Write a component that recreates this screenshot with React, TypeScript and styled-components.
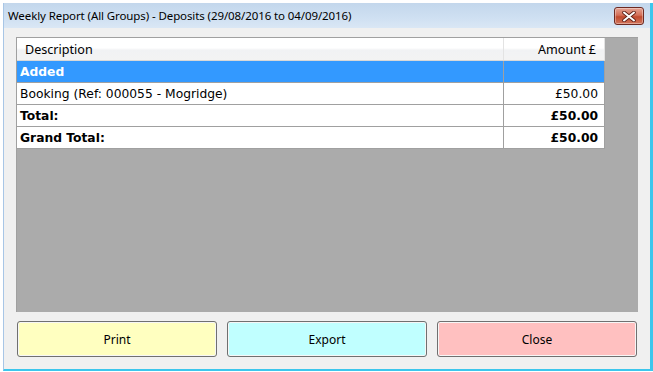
import { type FC } from "react";
import { createGlobalStyle, styled } from "styled-components";

const GlobalStyle = createGlobalStyle`
  html, body {
    margin: 0;
    padding: 0;
    background: #ffffff;
  }
`;

const Window = styled.div`
  margin: 3px 0 0 3px;
  width: 646px;
  height: 366px;
  border-left: 1px solid #a8c6e6;
  border-right: 3px solid #3cc6ec;
  border-bottom: 2px solid #3cc6ec;
  display: flex;
  flex-direction: column;
  font-family: "Noto Sans", "DejaVu Sans", sans-serif;
`;

const TitleBar = styled.div`
  height: 25px;
  display: flex;
  align-items: center;
  justify-content: space-between;
  padding: 0 6px 0 4px;
  background: linear-gradient(to bottom, #c3d7ec 0%, #cfe0f2 60%, #dae7f5 100%);
`;

const Title = styled.span`
  font-size: 11.5px;
  color: #000;
  letter-spacing: -0.1px;
`;

const CloseButton = styled.button`
  width: 30px;
  height: 18px;
  margin-top: 1px;
  padding: 0;
  border: 1px solid #6d2a22;
  border-radius: 3px;
  background: linear-gradient(to bottom, #e4a393 0%, #d46f58 45%, #c04a2e 55%, #d3765d 100%);
  box-shadow: inset 0 0 0 1px rgba(255, 255, 255, 0.35);
  display: flex;
  align-items: center;
  justify-content: center;
`;

const Body = styled.div`
  flex: 1;
  background: #f0f0f0;
  padding: 9px 12px 11px 12px;
  display: flex;
  flex-direction: column;
`;

const GridPanel = styled.div`
  height: 275px;
  background: #ababab;
  border-left: 1px solid #a0a0a0;
  border-top: 1px solid #a0a0a0;
  box-sizing: border-box;
`;

const Table = styled.table`
  width: 588px;
  border-collapse: collapse;
  background: #fff;
  font-family: "DejaVu Sans", Verdana, sans-serif;
  font-size: 12.3px;
  color: #000;
`;

const HeadCell = styled.th<{ $right?: boolean }>`
  height: 22px;
  padding: 0 8px;
  font-family: "Noto Sans", sans-serif;
  font-size: 12.6px;
  font-weight: normal;
  text-align: ${(p) => (p.$right ? "right" : "left")};
  width: ${(p) => (p.$right ? "84px" : "auto")};
  background: linear-gradient(to bottom, #ffffff 0%, #ffffff 45%, #f1f2f4 55%, #f3f3f3 100%);
  border-right: 1px solid #e3e3e3;
  border-bottom: 1px solid #d8d8d8;
`;

const Row = styled.tr<{ $selected?: boolean }>`
  background: ${(p) => (p.$selected ? "#3399ff" : "#ffffff")};
  color: ${(p) => (p.$selected ? "#ffffff" : "#000000")};
`;

const Cell = styled.td<{ $right?: boolean; $bold?: boolean }>`
  height: 21px;
  padding: 0 ${(p) => (p.$right ? "6px" : "3px")};
  text-align: ${(p) => (p.$right ? "right" : "left")};
  font-weight: ${(p) => (p.$bold ? "bold" : "normal")};
  border-bottom: 1px solid #a0a0a0;
  border-right: 1px solid #a0a0a0;
  white-space: nowrap;
`;

const ButtonRow = styled.div`
  margin-top: 9px;
  display: flex;
  gap: 10px;
  padding-left: 1px;
`;

const ActionButton = styled.button<{ $bg: string }>`
  width: 200px;
  height: 36px;
  border: 1px solid #707070;
  border-radius: 3px;
  background: ${(p) => p.$bg};
  box-shadow: inset 0 0 0 1px #f6f6f6;
  font-family: "Noto Sans", sans-serif;
  font-size: 12px;
  color: #000;
  padding: 0;
`;

type Line = {
  label: string;
  amount: string;
  bold?: boolean;
  selected?: boolean;
};

const lines: Line[] = [
  { label: "Added", amount: "", bold: true, selected: true },
  { label: "Booking (Ref: 000055 - Mogridge)", amount: "£50.00" },
  { label: "Total:", amount: "£50.00", bold: true },
  { label: "Grand Total:", amount: "£50.00", bold: true },
];

const App: FC = () => {
  return (
    <>
      <GlobalStyle />
      <Window>
        <TitleBar>
          <Title>Weekly Report (All Groups) - Deposits (29/08/2016 to 04/09/2016)</Title>
          <CloseButton aria-label="Close">
            <svg width="14" height="11" viewBox="0 0 14 11">
              <path
                d="M2 1.5 L12 9.5 M12 1.5 L2 9.5"
                stroke="#5a1e16"
                strokeWidth="3.6"
                strokeLinecap="round"
              />
              <path
                d="M2 1.5 L12 9.5 M12 1.5 L2 9.5"
                stroke="#ffffff"
                strokeWidth="2"
                strokeLinecap="round"
              />
            </svg>
          </CloseButton>
        </TitleBar>
        <Body>
          <GridPanel>
            <Table>
              <thead>
                <tr>
                  <HeadCell>Description</HeadCell>
                  <HeadCell $right>Amount £</HeadCell>
                </tr>
              </thead>
              <tbody>
                {lines.map((l) => (
                  <Row key={l.label} $selected={l.selected}>
                    <Cell $bold={l.bold}>{l.label}</Cell>
                    <Cell $right $bold={l.bold}>
                      {l.amount}
                    </Cell>
                  </Row>
                ))}
              </tbody>
            </Table>
          </GridPanel>
          <ButtonRow>
            <ActionButton $bg="#ffffc0">Print</ActionButton>
            <ActionButton $bg="#c0ffff">Export</ActionButton>
            <ActionButton $bg="#ffc0c0">Close</ActionButton>
          </ButtonRow>
        </Body>
      </Window>
    </>
  );
};

export default App;
